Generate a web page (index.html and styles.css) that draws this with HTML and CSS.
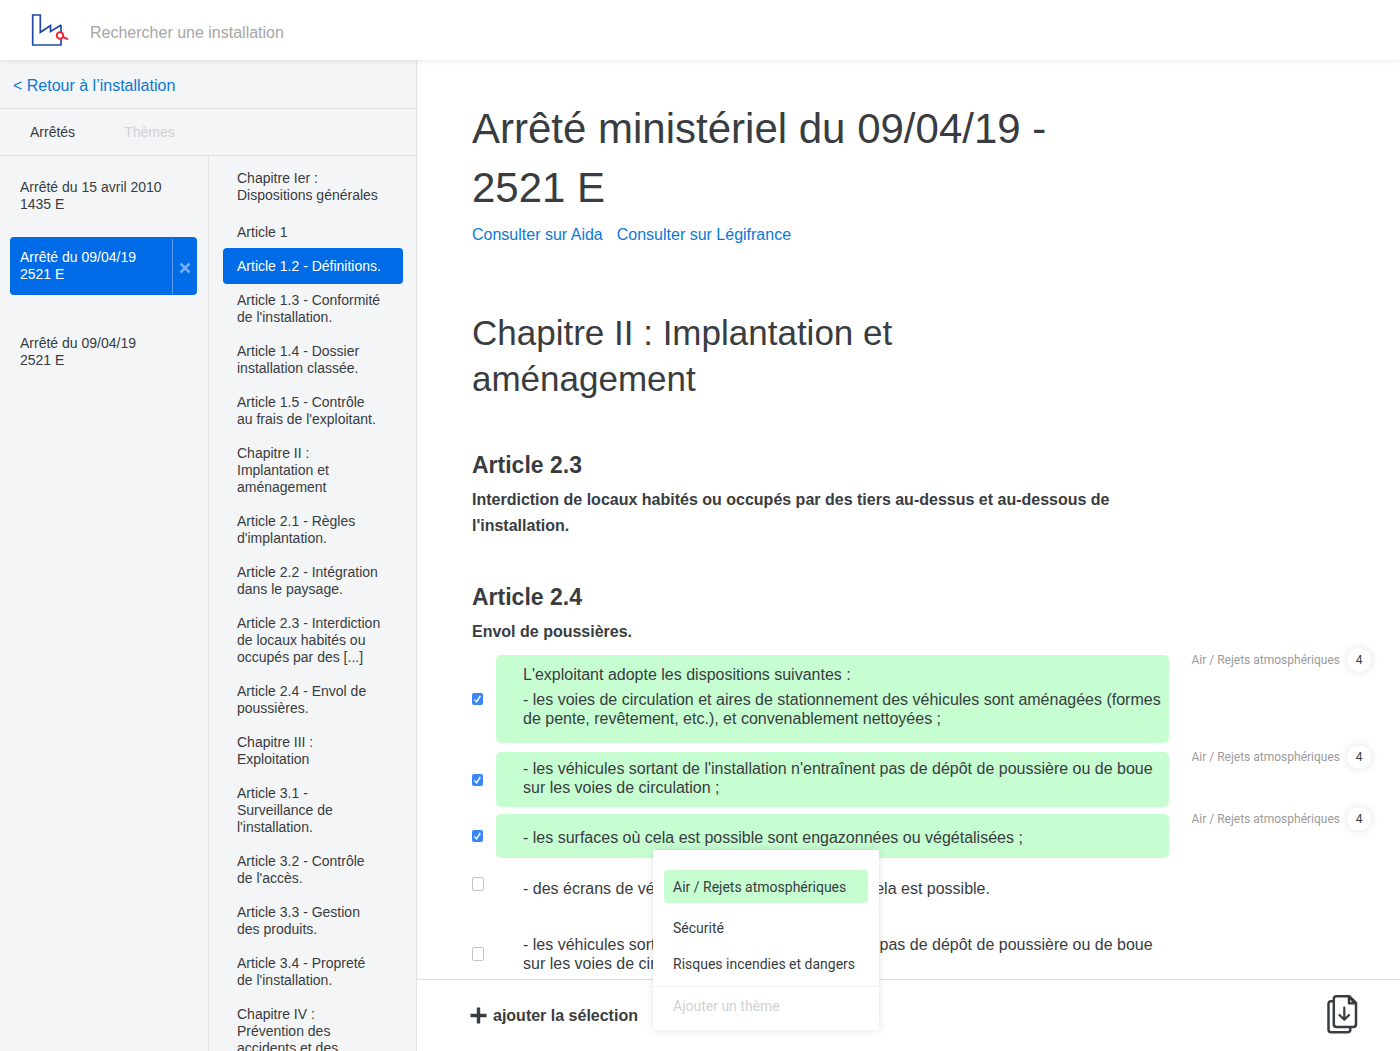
FILE: index.html
```html
<!DOCTYPE html>
<html lang="fr">
<head>
<meta charset="utf-8">
<meta name="viewport" content="width=device-width, initial-scale=1">
<title>Arrêté ministériel du 09/04/19 - 2521 E</title>
<link rel="stylesheet" href="styles.css">
</head>
<body>
<div class="app">
  <header class="topbar">
    <a class="logo" href="#" aria-label="Accueil">
      <svg width="38" height="34" viewBox="0 0 38 34" fill="none">
        <path d="M30 12V19.500M30 25.500V32H1.700V2H9.300V19.300L19.500 12.500V18.500L30 12" stroke="#2149a5" stroke-width="1.700"/>
        <circle cx="29" cy="22.500" r="3.300" fill="#fff" stroke="#ee2436" stroke-width="1.900"/>
        <path d="M32 23.800L37 26.400" stroke="#ee2436" stroke-width="2"/>
      </svg>
    </a>
    <input class="search" type="text" placeholder="Rechercher une installation" aria-label="Rechercher une installation">
  </header>

  <div class="workspace">
    <aside class="sidebar">
      <a class="back" href="#">&lt; Retour à l’installation</a>
      <nav class="tabs">
        <a class="tab tab-active" href="#">Arrêtés</a>
        <a class="tab" href="#">Thèmes</a>
      </nav>
      <div class="columns">
        <ul class="texts">
          <li class="text"><a class="text-link" href="#">Arrêté du 15 avril 2010<br>1435 E</a></li>
          <li class="text text-selected">
            <a class="text-link" href="#">Arrêté du 09/04/19<br>2521 E</a>
            <button class="text-remove" type="button" aria-label="Retirer">
              <svg width="12" height="12" viewBox="0 0 12 12"><path d="M1.500 1.500L10.500 10.500M10.500 1.500L1.500 10.500" stroke="currentColor" stroke-width="2.600"/></svg>
            </button>
          </li>
          <li class="text"><a class="text-link" href="#">Arrêté du 09/04/19<br>2521 E</a></li>
        </ul>
        <nav class="toc">
          <a class="toc-link toc-first" href="#">Chapitre Ier : Dispositions générales</a>
          <a class="toc-link" href="#">Article 1</a>
          <a class="toc-link toc-selected" href="#">Article 1.2 - Définitions.</a>
          <a class="toc-link" href="#">Article 1.3 - Conformité de l'installation.</a>
          <a class="toc-link" href="#">Article 1.4 - Dossier installation classée.</a>
          <a class="toc-link" href="#">Article 1.5 - Contrôle au frais de l'exploitant.</a>
          <a class="toc-link" href="#">Chapitre II : Implantation et aménagement</a>
          <a class="toc-link" href="#">Article 2.1 - Règles d'implantation.</a>
          <a class="toc-link" href="#">Article 2.2 - Intégration dans le paysage.</a>
          <a class="toc-link" href="#">Article 2.3 - Interdiction de locaux habités ou occupés par des [...]</a>
          <a class="toc-link" href="#">Article 2.4 - Envol de poussières.</a>
          <a class="toc-link" href="#">Chapitre III : Exploitation</a>
          <a class="toc-link" href="#">Article 3.1 - Surveillance de l'installation.</a>
          <a class="toc-link" href="#">Article 3.2 - Contrôle de l'accès.</a>
          <a class="toc-link" href="#">Article 3.3 - Gestion des produits.</a>
          <a class="toc-link" href="#">Article 3.4 - Propreté de l'installation.</a>
          <a class="toc-link" href="#">Chapitre IV : Prévention des accidents et des</a>
        </nav>
      </div>
    </aside>

    <main class="main">
      <div class="document">
        <div class="headings">
          <h1 class="title">Arrêté ministériel du 09/04/19 - 2521 E</h1>
          <p class="sources"><a href="#">Consulter sur Aida</a><a href="#">Consulter sur Légifrance</a></p>
          <h2 class="chapter">Chapitre II : Implantation et aménagement</h2>
        </div>

        <section class="article">
          <h3 class="article-title">Article 2.3</h3>
          <p class="article-subject">Interdiction de locaux habités ou occupés par des tiers au-dessus et au-dessous de l'installation.</p>
        </section>

        <section class="article">
          <h3 class="article-title">Article 2.4</h3>
          <p class="article-subject">Envol de poussières.</p>

          <div class="alinea alinea-tall">
            <input class="check" type="checkbox" id="a1" checked>
            <label class="alinea-text marked" for="a1"><span>L'exploitant adopte les dispositions suivantes :</span><span>- les voies de circulation et aires de stationnement des véhicules sont aménagées (formes de pente, revêtement, etc.), et convenablement nettoyées ;</span></label>
            <div class="tag"><span>Air / Rejets atmosphériques</span><button class="count" type="button">4</button></div>
          </div>
          <div class="alinea alinea-short">
            <input class="check" type="checkbox" id="a2" checked>
            <label class="alinea-text marked" for="a2">- les véhicules sortant de l'installation n'entraînent pas de dépôt de poussière ou de boue sur les voies de circulation ;</label>
            <div class="tag"><span>Air / Rejets atmosphériques</span><button class="count" type="button">4</button></div>
          </div>
          <div class="alinea">
            <input class="check" type="checkbox" id="a3" checked>
            <label class="alinea-text marked" for="a3">- les surfaces où cela est possible sont engazonnées ou végétalisées ;</label>
            <div class="tag"><span>Air / Rejets atmosphériques</span><button class="count" type="button">4</button></div>
          </div>
          <div class="alinea alinea-open">
            <input class="check" type="checkbox" id="a4">
            <label class="alinea-text" for="a4">- des écrans de végétation sont mis en place où cela est possible.</label>
          </div>
          <div class="alinea alinea-last">
            <input class="check" type="checkbox" id="a5">
            <label class="alinea-text" for="a5">- les véhicules sortant de l'installation n'entraînent pas de dépôt de poussière ou de boue sur les voies de circulation ;</label>
          </div>
        </section>
      </div>

      <footer class="actions">
        <button class="add" type="button">
          <svg width="17" height="17" viewBox="0 0 17 17"><path d="M8.500 0.500V16.500M0.500 8.500H16.500" stroke="currentColor" stroke-width="3.400"/></svg>
          <span>ajouter la sélection</span>
        </button>
        <button class="download" type="button" aria-label="Télécharger">
          <svg width="32" height="42" viewBox="0 0 32 42" fill="none" stroke="currentColor" stroke-width="2.500" stroke-linejoin="round" stroke-linecap="round">
            <path d="M6 6.300H4.300Q1.500 6.300 1.500 9V34.500Q1.500 37.300 4.300 37.300H20.500Q23.300 37.300 23.300 34.800V33"/>
            <path d="M22.500 1.300H9.500Q6.800 1.300 6.800 4V29.300Q6.800 32 9.500 32H26.300Q29 32 29 29.300V7.800Z"/>
            <path d="M22 1.800V8.300H28.500Z"/>
            <path d="M17.300 12.500V24.500M12.500 20L17.300 24.800L22.100 20" stroke-width="2.200"/>
          </svg>
        </button>
        <div class="menu">
          <div class="menu-options">
            <button class="option option-selected" type="button">Air / Rejets atmosphériques</button>
            <button class="option" type="button">Sécurité</button>
            <button class="option" type="button">Risques incendies et dangers</button>
          </div>
          <input class="menu-new" type="text" placeholder="Ajouter un thème" aria-label="Ajouter un thème">
        </div>
      </footer>
    </main>
  </div>
</div>
</body>
</html>
```
FILE: styles.css
```css
* {
  box-sizing: border-box;
}

body {
  margin: 0;
  color: #393c40;
  background: #fff;
  font: 16px/19px "Helvetica Neue", "Liberation Sans", Arial, sans-serif;
}

a {
  color: #0b78d6;
  text-decoration: none;
}

button,
input {
  margin: 0;
  padding: 0;
  border: 0;
  background: none;
  color: inherit;
  font: inherit;
}

button {
  cursor: pointer;
}

h1, h2, h3, p, ul {
  margin: 0;
  padding: 0;
  font-weight: 400;
}

.app {
  display: flex;
  flex-direction: column;
  height: 100vh;
}

/* Top bar */
.topbar {
  display: flex;
  align-items: center;
  gap: 21px;
  flex: none;
  height: 60px;
  padding: 0 31px;
  position: relative;
  z-index: 1;
  background: #fff;
  box-shadow: 0 0 6px rgba(0, 0, 0, 0.12);
}

.logo svg {
  display: block;
}

.search {
  flex: 1;
  height: 40px;
  padding-top: 5px;
}

.search::placeholder {
  color: #a6a6a6;
  opacity: 1;
}

.workspace {
  display: flex;
  flex: 1;
  min-height: 0;
}

/* Sidebar */
.sidebar {
  display: flex;
  flex-direction: column;
  flex: none;
  width: 417px;
  background: #f3f5f7;
  border-right: 1px solid #e1e3e5;
  box-shadow: 0 0 8px rgba(0, 0, 0, 0.05);
}

.back {
  padding: 16px 13px 13px;
  border-bottom: 1px solid #e1e3e5;
}

.tabs {
  display: flex;
  gap: 49px;
  padding: 15px 30px 14px;
  border-bottom: 1px solid #e1e3e5;
  font-size: 14px;
  line-height: 17px;
}

.tab {
  color: #d0d2d4;
}

.tab-active {
  color: #393c40;
}

.columns {
  display: grid;
  grid-template-columns: 209px 1fr;
  flex: 1;
  min-height: 0;
  font-size: 14px;
  line-height: 17px;
}

.texts {
  padding: 11px 11px 11px 10px;
  border-right: 1px solid #e1e3e5;
  list-style: none;
}

.text {
  display: flex;
  margin-bottom: 12px;
}

.text-link {
  flex: 1;
  padding: 12px 10px;
  color: inherit;
}

.text-selected {
  margin-bottom: 28px;
  border-radius: 4px;
  background: #006be6;
  color: #fff;
}

.text-remove {
  display: grid;
  place-items: center;
  width: 25px;
  margin: 2px 0 1px;
  padding-top: 3px;
  border-left: 1px solid #5c9fee;
  color: #73adf1;
}

.toc {
  display: flex;
  flex-direction: column;
  min-height: 0;
  padding: 5px 13px 0 14px;
  overflow-y: auto;
  scrollbar-width: none;
}

.toc-link {
  flex: none;
  padding: 9px 20px 8px 14px;
  color: inherit;
}

.toc-first {
  margin-bottom: 3px;
}

.toc-selected {
  margin: -1px 0;
  padding-top: 10px;
  padding-bottom: 9px;
  border-radius: 4px;
  background: #006be6;
  color: #fff;
}

/* Document */
.main {
  display: flex;
  flex-direction: column;
  flex: 1;
  min-width: 0;
}

.document {
  flex: 1;
  min-height: 0;
  padding: 39px 29px 0 55px;
  overflow-y: auto;
  scrollbar-width: none;
}

.headings {
  max-width: 600px;
}

.title {
  margin-bottom: 5px;
  font-size: 42px;
  line-height: 59px;
}

.sources {
  display: flex;
  gap: 14px;
  line-height: 26px;
}

.chapter {
  max-width: 440px;
  margin: 62px 0 48px;
  font-size: 35px;
  line-height: 46px;
}

.article {
  margin-bottom: 43px;
}

.article-title {
  margin-bottom: 7px;
  font-size: 23px;
  font-weight: 700;
  line-height: 30px;
}

.article-subject {
  max-width: 680px;
  font-weight: 700;
  line-height: 26px;
}

.alinea {
  display: grid;
  grid-template-columns: 24px minmax(0, 1fr) 202px;
  align-items: center;
  margin-bottom: 7px;
}

.alinea-text {
  display: flex;
  flex-direction: column;
  gap: 6px;
  padding: 14px 0 11px 27px;
}

.marked {
  border-radius: 5px;
  background: #c6fdd1;
}

.alinea-tall {
  margin: 10px 0 9px;
}

.alinea-tall .alinea-text {
  padding-top: 10px;
  padding-bottom: 15px;
}

.alinea-short .alinea-text {
  padding-top: 7px;
  padding-bottom: 10px;
}

.alinea-open {
  margin-bottom: 32px;
}

.alinea-open .alinea-text {
  padding-bottom: 5px;
}

.alinea-last .alinea-text {
  padding-top: 0;
  padding-bottom: 0;
}

.check {
  width: 12px;
  height: 14px;
  border: 1px solid #c4c6c8;
  border-radius: 2px;
  appearance: none;
}

.check:checked {
  width: 11px;
  height: 12px;
  border: 0;
  background: #3b86f7 url("data:image/svg+xml,%3Csvg xmlns='http://www.w3.org/2000/svg' viewBox='0 0 11 12'%3E%3Cpath d='M2.500 6.500L4.600 8.800L8.300 3' fill='none' stroke='white' stroke-width='1.400'/%3E%3C/svg%3E") center / 11px 12px no-repeat;
}

.tag {
  display: flex;
  align-items: center;
  justify-content: flex-end;
  align-self: start;
  gap: 7px;
  margin-top: -7px;
  color: #9b9b9b;
  font: 12px/24px Roboto, sans-serif;
}

.count {
  width: 24px;
  height: 24px;
  border-radius: 50%;
  background: #fff;
  box-shadow: 0 0 8px rgba(0, 0, 0, 0.12);
  color: #393c40;
}

/* Bottom bar */
.actions {
  display: flex;
  align-items: center;
  justify-content: space-between;
  flex: none;
  height: 72px;
  padding: 0 41px 0 53px;
  position: relative;
  background: #fff;
  border-top: 1px solid #dcdee2;
}

.add {
  display: flex;
  align-items: center;
  gap: 6px;
  font-weight: 700;
}

.download svg {
  display: block;
}

.menu {
  position: absolute;
  bottom: 21px;
  left: 236px;
  width: 226px;
  background: #fff;
  box-shadow: 0 0 8px rgba(0, 0, 0, 0.12);
  font: 14px/34px Roboto, sans-serif;
}

.menu-options {
  display: flex;
  flex-direction: column;
  gap: 3px;
  padding: 20px 11px 6px;
  border-bottom: 1px solid #eff0f1;
}

.option {
  height: 33px;
  padding: 0 9px;
  border-radius: 4px;
  text-align: left;
}

.option-selected {
  margin-bottom: 5px;
  background: #c6fdd1;
}

.menu-new {
  display: block;
  width: 100%;
  height: 43px;
  padding: 0 20px 5px;
}

.menu-new::placeholder {
  color: #cfd1d3;
  opacity: 1;
}
```
